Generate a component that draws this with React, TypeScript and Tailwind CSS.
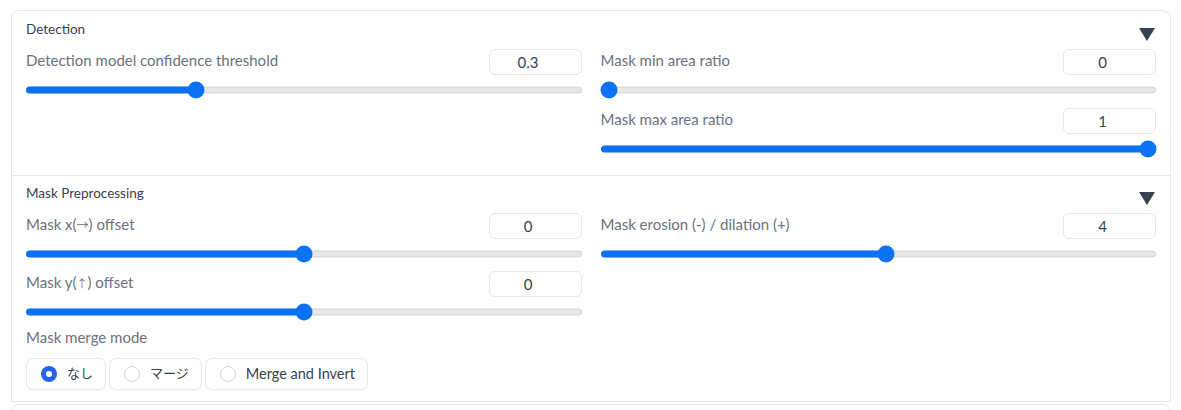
import React from "react";

const FONT = { fontFamily: 'Lato, "Noto Sans CJK JP", sans-serif' };
const CJK = { fontFamily: '"Noto Sans CJK JP", sans-serif' };

function Slider({ frac }: { frac: number }) {
  const pos = `calc(8px + ${frac} * (100% - 16px))`;
  return (
    <div className="relative mt-[6px] h-[17px]">
      <div className="absolute left-0 right-0 top-1/2 h-[7px] -translate-y-1/2 rounded-full border border-[#d2d2d2] bg-[#e8e8e8]" />
      <div
        className="absolute left-0 top-1/2 h-[7px] -translate-y-1/2 rounded-full bg-[#0b72f4]"
        style={{ width: pos }}
      />
      <div
        className="absolute top-1/2 h-[17px] w-[17px] -translate-x-1/2 -translate-y-1/2 rounded-full bg-[#0b72f4]"
        style={{ left: pos }}
      />
    </div>
  );
}

function SliderBlock({ label, value, frac }: { label: React.ReactNode; value: string; frac: number }) {
  return (
    <div>
      <div className="flex h-[26px] items-start justify-between">
        <span className="mt-[1px] text-[15px] leading-[20px] text-[#6b7280]">{label}</span>
        <div className="flex h-[26px] w-[93px] items-center justify-center rounded-[6px] border border-[#e5e7eb] bg-white pr-[14px] text-[15px] text-[#374151]">
          {value}
        </div>
      </div>
      <Slider frac={frac} />
    </div>
  );
}

function Title({ text }: { text: string }) {
  return (
    <div className="flex h-[18px] items-start justify-between overflow-visible">
      <span className="text-[13.5px] leading-[18px] text-[#374151]">{text}</span>
      <svg width="16" height="14" viewBox="0 0 16 14" className="mr-[1px] mt-[8px] shrink-0">
        <polygon points="0,0 16,0 8,13" fill="#374151" />
      </svg>
    </div>
  );
}

function Radio({ label, checked, cjk }: { label: string; checked?: boolean; cjk?: boolean }) {
  return (
    <div className="flex h-[32px] items-center gap-[10px] rounded-[7px] border border-[#e5e7eb] bg-white pl-[14px] pr-[12px] shadow-[0_1px_2px_rgba(0,0,0,0.04)]">
      {checked ? (
        <span className="flex h-[16px] w-[16px] items-center justify-center rounded-full bg-[#2563eb]">
          <span className="h-[6px] w-[6px] rounded-full bg-white" />
        </span>
      ) : (
        <span className="h-[16px] w-[16px] rounded-full border border-[#d1d5db] bg-white" />
      )}
      <span className={cjk ? "text-[13px] text-[#374151]" : "text-[14.5px] text-[#374151]"}>{label}</span>
    </div>
  );
}

export default function App() {
  return (
    <div className="h-[410px] w-[1181px] overflow-hidden bg-white" style={FONT}>
      <div className="ml-[11px] mt-[10px] w-[1160px] rounded-t-[8px] border border-[#e5e7eb]">
        {/* Detection */}
        <div className="px-[14px] pt-[9px] pb-[18px]">
          <Title text="Detection" />
          <div className="mt-[11px] grid grid-cols-2 items-start gap-x-[19px]">
            <div>
              <SliderBlock label="Detection model confidence threshold" value="0.3" frac={0.3} />
            </div>
            <div className="flex flex-col gap-[10px]">
              <SliderBlock label="Mask min area ratio" value="0" frac={0} />
              <SliderBlock label="Mask max area ratio" value="1" frac={1} />
            </div>
          </div>
        </div>
        {/* Mask Preprocessing */}
        <div className="border-t border-[#e5e7eb] px-[14px] pt-[8px] pb-[11px]">
          <Title text="Mask Preprocessing" />
          <div className="mt-[11px] grid grid-cols-2 items-start gap-x-[19px]">
            <div className="flex flex-col">
              <SliderBlock
                label={
                  <>
                    Mask x(<span style={CJK} className="text-[12px]">→</span>) offset
                  </>
                }
                value="0"
                frac={0.5}
              />
              <div className="mt-[9px]">
                <SliderBlock
                  label={
                    <>
                      Mask y(<span style={CJK} className="text-[11px]">↑</span>) offset
                    </>
                  }
                  value="0"
                  frac={0.5}
                />
              </div>
              <div className="mt-[7px] text-[15px] leading-[20px] text-[#6b7280]">Mask merge mode</div>
              <div className="mt-[11px] flex gap-[3px]">
                <Radio label="なし" checked cjk />
                <Radio label="マージ" cjk />
                <Radio label="Merge and Invert" />
              </div>
            </div>
            <div>
              <SliderBlock label="Mask erosion (-) / dilation (+)" value="4" frac={0.515} />
            </div>
          </div>
        </div>
      </div>
      <div className="ml-[11px] mt-[2px] h-[20px] w-[1160px] rounded-t-[8px] border border-[#e5e7eb]" />
    </div>
  );
}
